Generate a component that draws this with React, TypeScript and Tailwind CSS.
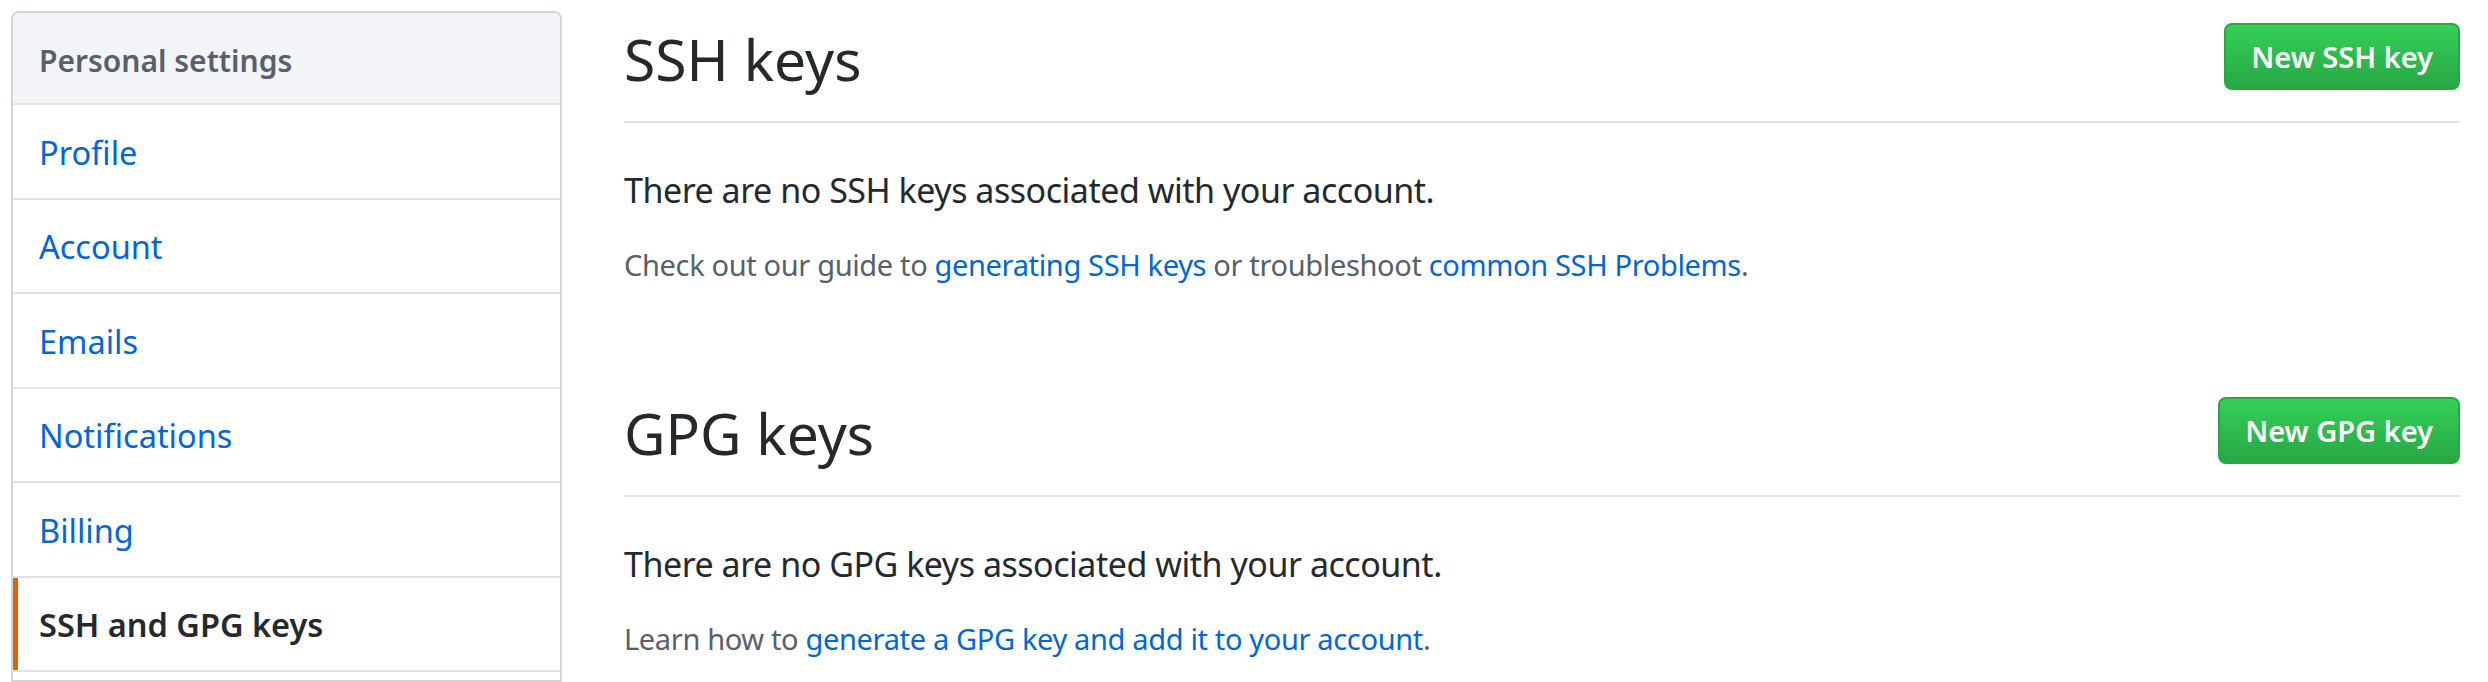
import React from 'react';

const font = { fontFamily: '"Noto Sans", "Open Sans", sans-serif' };

const items = ['Profile', 'Account', 'Emails', 'Notifications', 'Billing', 'SSH and GPG keys'];

const Sidebar: React.FC = () => {
  return (
    <nav className="w-[551px] shrink-0 border-2 border-[#d1d5da] rounded-t-[8px] overflow-hidden">
      <div className="h-[92px] flex items-center pt-[4px] pl-[26px] bg-[#f3f4f7] border-b-2 border-[#e1e4e8] text-[30px] font-semibold text-[#586069]">
        Personal settings
      </div>
      {items.map((item) => {
        const selected = item === 'SSH and GPG keys';
        return (
          <div
            key={item}
            className={
              selected
                ? 'relative h-[94.5px] flex items-center pt-[4px] pl-[26px] border-b-2 border-[#e1e4e8] text-[32.5px] font-semibold text-[#24292e]'
                : 'h-[94.5px] flex items-center pt-[4px] pl-[26px] border-b-2 border-[#e1e4e8] text-[32.5px] text-[#0366d6]'
            }
          >
            {selected && <span className="absolute left-0 top-0 bottom-0 w-[5px] bg-[#e36209]" />}
            {item}
          </div>
        );
      })}
      {/* next row, cut off by the window */}
      <div className="h-[94.5px] border-b-2 border-[#e1e4e8]" />
    </nav>
  );
};

const GreenButton: React.FC<{ children: React.ReactNode }> = ({ children }) => (
  <button className="mt-[3px] h-[67px] px-[25px] rounded-[8px] border-2 border-[#28a745] bg-gradient-to-b from-[#34d058] to-[#28a745] text-white text-[29px] font-semibold leading-none">
    {children}
  </button>
);

const Section: React.FC<{
  title: string;
  button: string;
  lead: string;
  children: React.ReactNode;
  className?: string;
}> = ({ title, button, lead, children, className }) => (
  <section className={className}>
    <div className="flex items-start justify-between pb-[24px] border-b-2 border-[#e1e4e8]">
      <h2 className="pt-[2px] text-[57px] leading-[75px] font-normal text-[#24292e]">{title}</h2>
      <GreenButton>{button}</GreenButton>
    </div>
    <p className="mt-[42px] text-[34px] leading-[50px] tracking-[-0.014em] text-[#24292e]">{lead}</p>
    <p className="mt-[28px] text-[29px] leading-[44px] tracking-[-0.012em] text-[#586069]">{children}</p>
  </section>
);

const App: React.FC = () => {
  return (
    <div className="w-[2488px] h-[682px] overflow-hidden bg-white flex pl-[11px] pt-[11px] pr-[28px]" style={font}>
      <Sidebar />
      <main className="flex-1 ml-[62px] pt-[9px]">
        <Section
          title="SSH keys"
          button="New SSH key"
          lead="There are no SSH keys associated with your account."
        >
          Check out our guide to <a className="text-[#0366d6]">generating SSH keys</a> or troubleshoot{' '}
          <a className="text-[#0366d6]">common SSH Problems</a>.
        </Section>
        <Section
          className="mt-[107px]"
          title="GPG keys"
          button="New GPG key"
          lead="There are no GPG keys associated with your account."
        >
          Learn how to <a className="text-[#0366d6]">generate a GPG key and add it to your account</a>.
        </Section>
      </main>
    </div>
  );
};

export default App;
